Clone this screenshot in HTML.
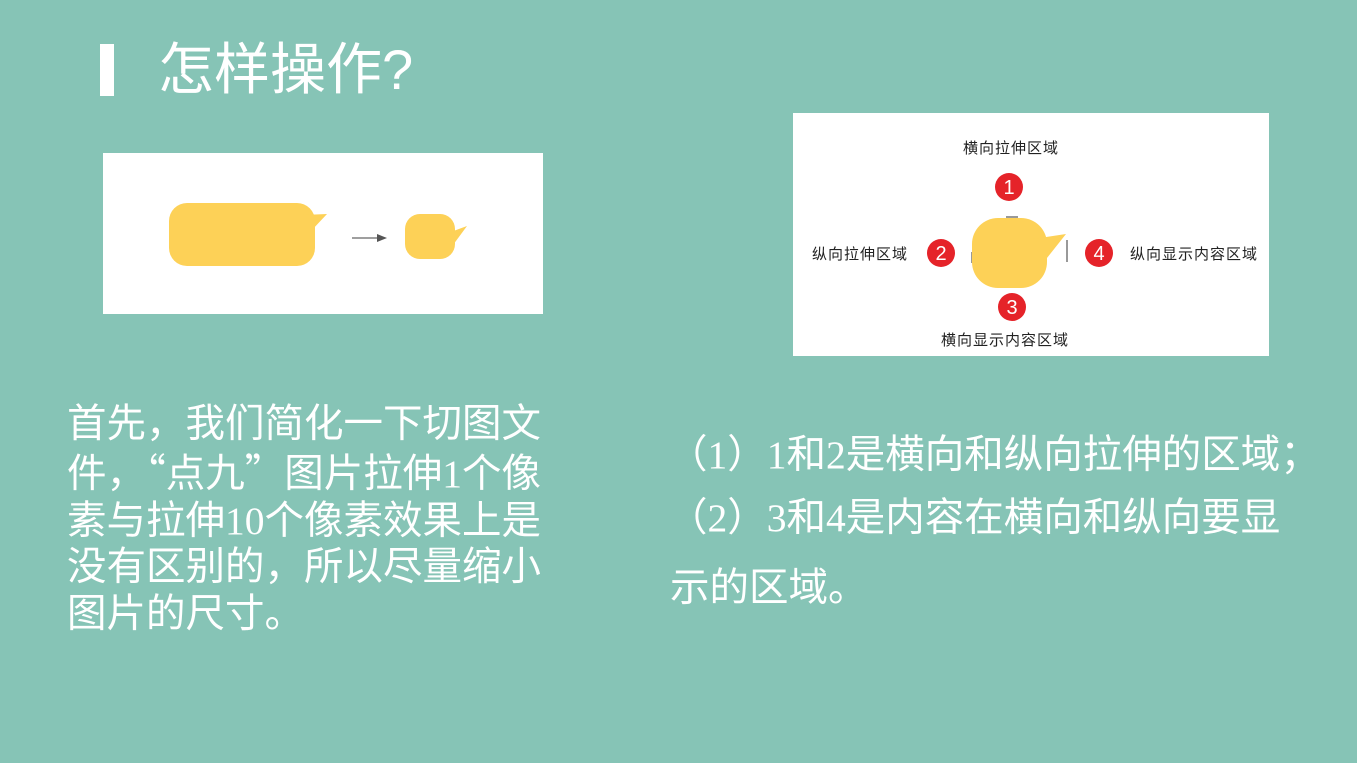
<!DOCTYPE html>
<html><head><meta charset="utf-8"><style>
html,body{margin:0;padding:0}
body{width:1357px;height:763px;background:#86c4b6;position:relative;overflow:hidden;font-family:"Liberation Sans","Noto Sans CJK SC",sans-serif;color:#fff}
.abs{position:absolute}
.title{left:158px;top:35px;font-size:56px;line-height:70px;white-space:nowrap}
.bar{left:100px;top:44px;width:14px;height:52px;background:#fff}
.p1{left:67px;top:401px;font-size:39.5px;line-height:46.8px;white-space:nowrap;font-family:"Liberation Serif","Noto Sans CJK SC",sans-serif}
.q{font-family:"Noto Sans CJK SC",sans-serif}
.p2{left:668px;font-size:39.5px;white-space:nowrap;font-family:"Liberation Serif","Noto Sans CJK SC",sans-serif}
.lab{font-size:15px;letter-spacing:1px;color:#222;white-space:nowrap;font-family:"Liberation Sans","Noto Sans CJK SC",sans-serif}
</style></head><body>
<div class="abs bar"></div>
<div class="abs title">怎样操作?</div>

<svg class="abs" style="left:103px;top:153px" width="440" height="161">
<rect width="440" height="161" fill="#fff"/>
<rect x="66" y="50" width="146" height="63" rx="18" fill="#fdd157"/>
<path d="M200 62 L224 61 L208 78 Z" fill="#fdd157"/>
<line x1="249" y1="85" x2="278" y2="85" stroke="#666" stroke-width="1.2"/>
<path d="M274 81 L284 85 L274 89 Z" fill="#555"/>
<rect x="302" y="61" width="50" height="45" rx="15" fill="#fdd157"/>
<path d="M345 80 L364 73 L350 92 Z" fill="#fdd157"/>
</svg>

<svg class="abs" style="left:793px;top:113px" width="476" height="243">
<rect width="476" height="243" fill="#fff"/>
<line x1="213" y1="104" x2="225" y2="104" stroke="#777" stroke-width="1.5"/>
<line x1="179" y1="139" x2="179" y2="150" stroke="#777" stroke-width="1.5"/>
<line x1="274" y1="127" x2="274" y2="149" stroke="#777" stroke-width="1.5"/>
<line x1="209" y1="174" x2="227" y2="174" stroke="#777" stroke-width="1.5"/>
<rect x="179" y="105" width="75" height="70" rx="26" fill="#fdd157"/>
<path d="M240 126 L273 121 L250 150 Z" fill="#fdd157"/>
<g fill="#e52329"><circle cx="216" cy="74" r="14"/><circle cx="148" cy="140" r="14"/><circle cx="219" cy="194" r="14"/><circle cx="306" cy="140" r="14"/></g>
<g fill="#fff" font-family="Liberation Sans" font-size="20" text-anchor="middle"><text x="216" y="81">1</text><text x="148" y="147">2</text><text x="219" y="201">3</text><text x="306" y="147">4</text></g>
</svg>
<div class="abs lab" style="left:963px;top:137px">横向拉伸区域</div>
<div class="abs lab" style="left:812px;top:243px">纵向拉伸区域</div>
<div class="abs lab" style="left:1130px;top:243px">纵向显示内容区域</div>
<div class="abs lab" style="left:941px;top:329px">横向显示内容区域</div>

<div class="abs p1">首先，我们简化一下切图文<br>件，<span class="q">“</span>点九<span class="q">”</span>图片拉伸1个像<br>素与拉伸10个像素效果上是<br>没有区别的，所以尽量缩小<br>图片的尺寸。</div>

<div class="abs p2" style="top:423px">（1）1和2是横向和纵向拉伸的区域；</div>
<div class="abs p2" style="top:486px">（2）3和4是内容在横向和纵向要显</div>
<div class="abs p2" style="top:556px;left:670px">示的区域。</div>
</body></html>
